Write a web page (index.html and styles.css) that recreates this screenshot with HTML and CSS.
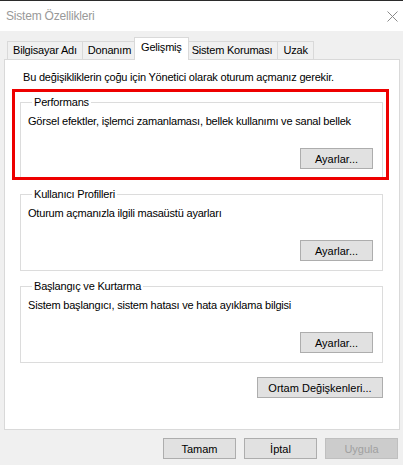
FILE: index.html
```html
<!DOCTYPE html>
<html lang="tr">
<head>
    <meta charset="UTF-8">
    <meta name="viewport" content="width=device-width, initial-scale=1.0">
    <title>Sistem Özellikleri</title>
    <link rel="stylesheet" href="styles.css">
</head>
<body>
    <div class="titlebar">
        <span class="title">Sistem Özellikleri</span>
        <svg class="close" width="11" height="11" viewBox="0 0 11 11">
            <path d="M0.5 0.5 L10.5 10.5 M10.5 0.5 L0.5 10.5" stroke="#8a8a8a" stroke-width="1" fill="none"/>
        </svg>
    </div>

    <div class="dialog">
        <div class="tabs">
            <div class="tab">Bilgisayar Adı</div>
            <div class="tab">Donanım</div>
            <div class="tab active">Gelişmiş</div>
            <div class="tab">Sistem Koruması</div>
            <div class="tab">Uzak</div>
        </div>

        <div class="panel">
            <p class="note">Bu değişikliklerin çoğu için Yönetici olarak oturum açmanız gerekir.</p>

            <div class="marked">
                <fieldset class="group">
                    <legend>Performans</legend>
                    <p>Görsel efektler, işlemci zamanlaması, bellek kullanımı ve sanal bellek</p>
                    <div class="row"><button type="button">Ayarlar...</button></div>
                </fieldset>
            </div>

            <fieldset class="group">
                <legend>Kullanıcı Profilleri</legend>
                <p>Oturum açmanızla ilgili masaüstü ayarları</p>
                <div class="row"><button type="button">Ayarlar...</button></div>
            </fieldset>

            <fieldset class="group">
                <legend>Başlangıç ve Kurtarma</legend>
                <p>Sistem başlangıcı, sistem hatası ve hata ayıklama bilgisi</p>
                <div class="row"><button type="button">Ayarlar...</button></div>
            </fieldset>

            <div class="row env">
                <button type="button" class="wide">Ortam Değişkenleri...</button>
            </div>
        </div>

        <div class="footer">
            <button type="button">Tamam</button>
            <button type="button">İptal</button>
            <button type="button" disabled>Uygula</button>
        </div>
    </div>
</body>
</html>
```

FILE: styles.css
```css
body {
    margin: 0;
    width: 403px;
    height: 465px;
    overflow: hidden;
    background: #f0f0f0;
    font-family: "Liberation Sans", Arial, sans-serif;
    font-size: 11px;
    letter-spacing: -0.2px;
    color: #000;
}

p { margin: 0; }

.titlebar {
    height: 30px;
    border-top: 1px solid #2b2b2b;
    background: #fff;
    display: flex;
    align-items: center;
    justify-content: space-between;
    padding: 0 5px 0 6px;
}

.title {
    font-size: 12px;
    color: #999;
}

.close { margin-top: 1px; }

.dialog {
    padding: 6px 3px 0 4px;
}

/* tab strip */
.tabs {
    height: 22px;
    display: flex;
    align-items: flex-end;
    padding-left: 3px;
}

.tab {
    height: 17px;
    line-height: 17px;
    padding: 0 5px;
    border: 1px solid #d9d9d9;
    border-bottom: none;
    background: #f0f0f0;
    margin-left: -1px;
}

.tab:first-child { margin-left: 0; }

.tab.active {
    position: relative;
    z-index: 1;
    height: 22px;
    line-height: 18px;
    background: #fff;
    margin: 0 -2px -1px -3px;
    padding: 0 6px;
}

.panel {
    height: 369px;
    border: 1px solid #d9d9d9;
    background: #fff;
    padding: 0 16px 0 15px;
}

.note {
    margin: 10px 0 0 3px;
    line-height: 15px;
}

.group {
    margin: 10px 0 0;
    padding: 0 9px 9px 7px;
    border: 1px solid #dcdcdc;
    min-inline-size: 0;
}

.group + .group { margin-top: 8px; }

.marked + .group { margin-top: 8px; }

.group legend {
    margin-left: 4px;
    padding: 0 2px;
    line-height: 14px;
}

.group p {
    margin-top: 5px;
    line-height: 15px;
}

.row {
    display: flex;
    justify-content: flex-end;
    margin-top: 19px;
}

.env { margin-top: 14px; }

/* red frame drawn over the first group */
.marked {
    position: relative;
}

.marked::after {
    content: "";
    position: absolute;
    left: -8px;
    top: -6px;
    right: -6px;
    bottom: -1px;
    border: 3px solid #ee0000;
    pointer-events: none;
}

button {
    width: 73px;
    height: 21px;
    padding: 0;
    border: 1px solid #adadad;
    background: #e1e1e1;
    font: inherit;
    color: #000;
}

button.wide { width: 126px; }

button:disabled {
    background: #cccccc;
    border-color: #bfbfbf;
    color: #a0a0a0;
}

.footer {
    display: flex;
    justify-content: flex-end;
    gap: 8px;
    margin: 8px 2px 0 0;
}
```
